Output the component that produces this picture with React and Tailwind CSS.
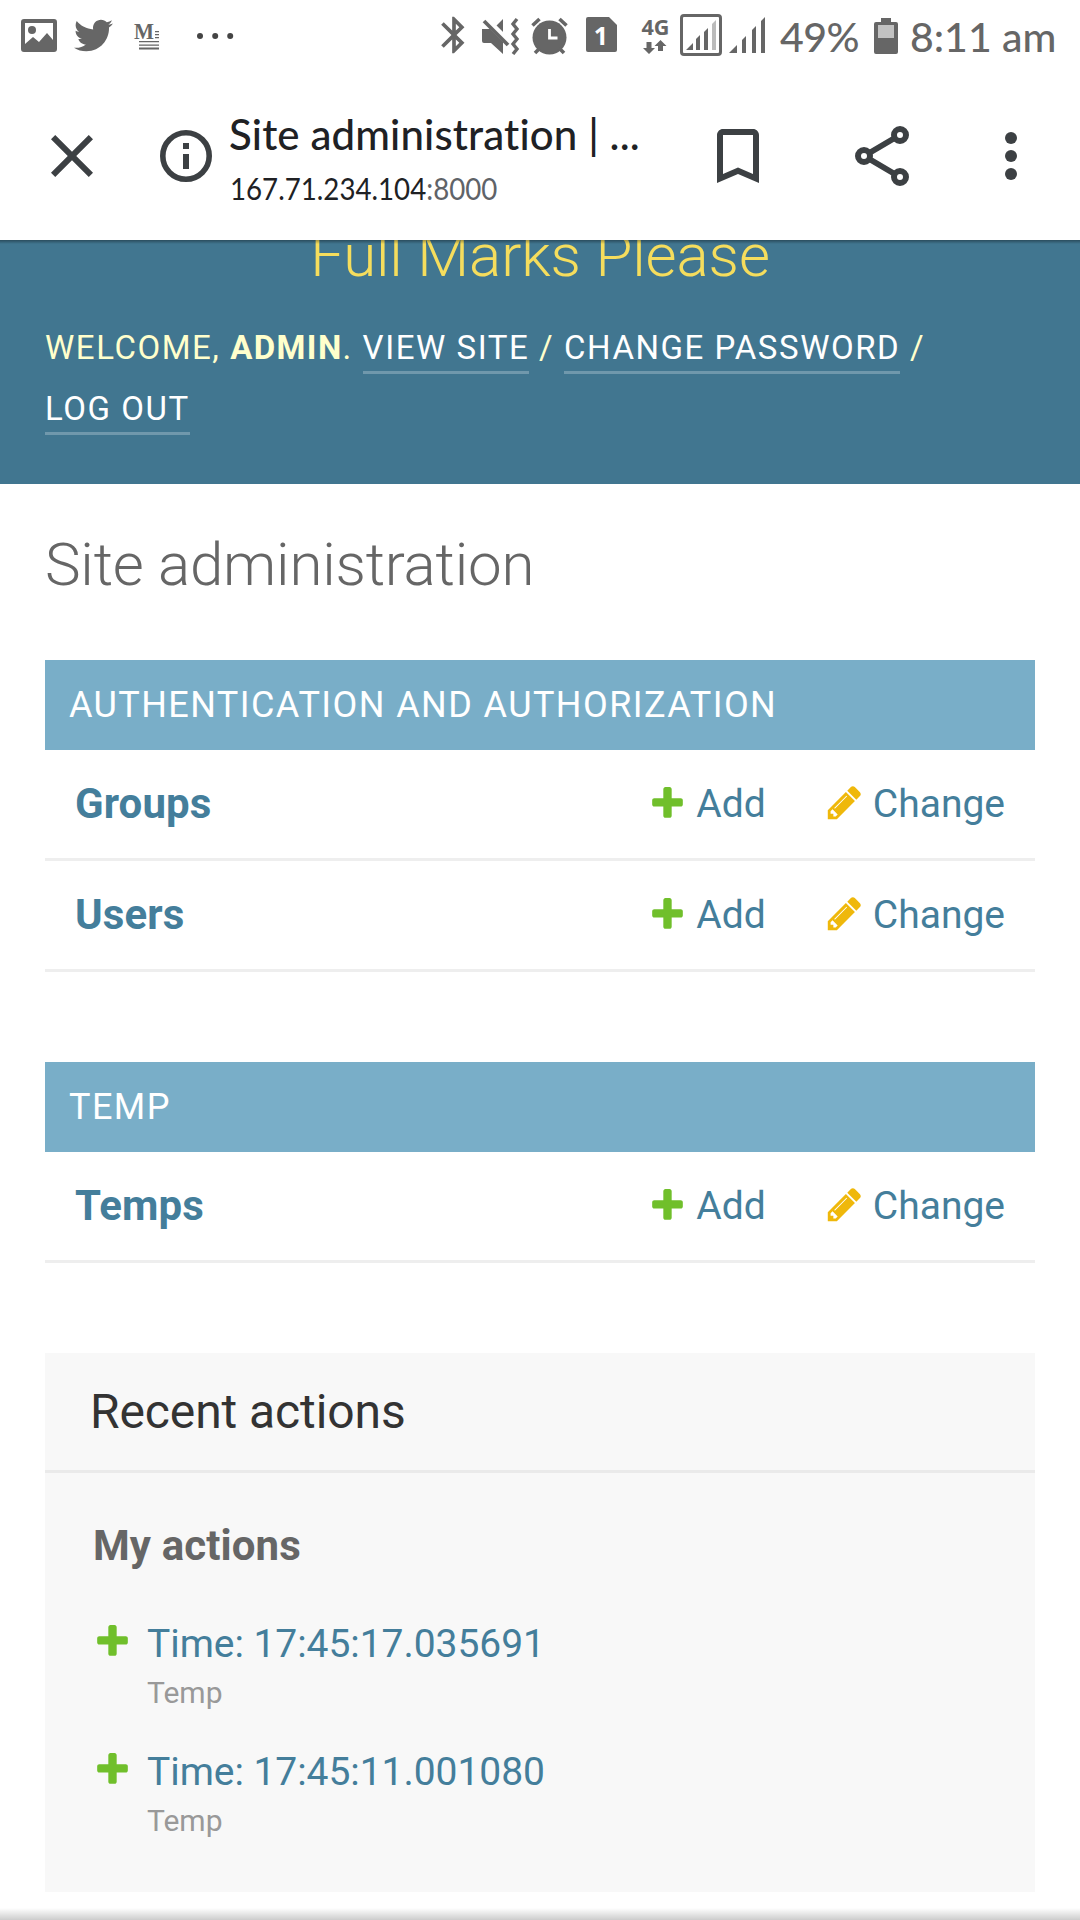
import React from "react";
import { FaTwitter } from "react-icons/fa";
import { MdBluetooth } from "react-icons/md";

const PlusIcon = ({ className }) => (
  <svg viewBox="0 0 1792 1792" className={`size-[39px] shrink-0 ${className || ""}`}>
    <path
      fill="#70bf2b"
      d="M1600 796v192q0 40-28 68t-68 28h-416v416q0 40-28 68t-68 28h-192q-40 0-68-28t-28-68v-416h-416q-40 0-68-28t-28-68v-192q0-40 28-68t68-28h416v-416q0-40 28-68t68-28h192q40 0 68 28t28 68v416h416q40 0 68 28t28 68z"
    />
  </svg>
);

const PencilIcon = () => (
  <svg viewBox="0 0 1792 1792" className="-mt-[3px] mr-[9px] size-[39px] shrink-0">
    <path
      fill="#efb80b"
      d="M491 1536l91-91-235-235-91 91v107h128v128h107zm523-928q0-22-22-22-10 0-17 7l-542 542q-7 7-7 17 0 22 22 22 10 0 17-7l542-542q7-7 7-17zm-54-192l416 416-832 832h-416v-416zm683 96q0 53-37 90l-166 166-416-416 166-165q36-38 90-38 53 0 91 38l235 234q37 39 37 91z"
    />
  </svg>
);

function StatusBar() {
  return (
    <div className="flex h-[72px] items-start text-[#666]">
      <svg className="mt-[19px] ml-[21px] h-[33px] w-9 shrink-0" viewBox="0 0 36 33" fill="currentColor">
        <path fillRule="evenodd" d="M3 0h30a3 3 0 0 1 3 3v27a3 3 0 0 1-3 3H3a3 3 0 0 1-3-3V3a3 3 0 0 1 3-3zm1 4v21l8-7 6 5 8-9 6 7V4z" />
        <circle cx="11" cy="11" r="4" />
      </svg>
      <FaTwitter className="mt-[16px] ml-[17px] size-[39px] shrink-0" />
      <svg className="mt-[13px] ml-[20px] h-[39px] w-[28px] shrink-0 overflow-visible" viewBox="0 -7 28 39" fill="currentColor">
        <text x="1" y="18.500" fontFamily="Liberation Serif" fontWeight="700" fontSize="23" textLength="20" lengthAdjust="spacingAndGlyphs">M</text>
        <path d="M22 11h4v1.300h-4zM22 14h4v1.300h-4zM22 17h4v1.300h-4zM6 21h20v1.300H6zM6 24.500h20v1.300H6zM6 27.500h20v2H6z" />
      </svg>
      <svg className="mt-[33px] ml-[36px] h-1.5 w-[37px] shrink-0" viewBox="0 0 37 6" fill="#444">
        <circle cx="3" cy="3" r="3" />
        <circle cx="18.200" cy="3" r="3" />
        <circle cx="33.200" cy="3" r="3" />
      </svg>
      <MdBluetooth className="-mr-[10px] mt-[13px] ml-[198px] size-[44px] shrink-0" />
      <svg className="mt-[17px] ml-[15px] h-[38px] w-[40px] shrink-0" viewBox="0 0 40 38" fill="currentColor">
        <path d="M1 12h8l13 13v12L10 26H3q-2 0-2-2zM22 2v14l-7-7z" />
        <path d="M6 1l24 24" stroke="#fff" strokeWidth="3" />
        <path d="M3 4l24 24" stroke="currentColor" strokeWidth="3.800" />
        <path d="M36 2l-4 5 4 5-4 5 4 5-4 5 4 5-4 5" fill="none" stroke="currentColor" strokeWidth="3.400" />
      </svg>
      <svg className="mt-[17px] ml-[10px] h-[38px] w-[38px] shrink-0" viewBox="0 0 38 38">
        <circle cx="18.500" cy="20.500" r="17" fill="currentColor" />
        <path d="M1.500 8.500l7-6.500M28.500 2l7 6.500M4 36l5-5M33 36l-5-5" stroke="currentColor" strokeWidth="3.600" />
        <path d="M18.500 12v9h8" fill="none" stroke="#fff" strokeWidth="2.800" />
      </svg>
      <svg className="mt-[17px] ml-[17px] h-[35px] w-[31px] shrink-0" viewBox="0 0 31 35">
        <path d="M2 0h21l8 8v25q0 2-2 2H2q-2 0-2-2V2q0-2 2-2z" fill="currentColor" />
        <text x="15" y="28" textAnchor="middle" fontFamily="Open Sans" fontWeight="700" fontSize="25" fill="#fff">1</text>
      </svg>
      <svg className="mt-[7px] ml-[24px] h-[48px] w-[29px] shrink-0 overflow-visible" viewBox="0 -10 29 48" fill="currentColor">
        <text x="0.500" y="17.500" fontFamily="Open Sans" fontWeight="700" fontSize="22" textLength="28" lengthAdjust="spacingAndGlyphs">4G</text>
        <path d="M5.500 25h5v6h3.500l-6 6-6-6h3.500zM17 34h5v-5h3.500l-6-6-6 6h3.500z" />
      </svg>
      <svg className="mt-[14px] ml-[10px] h-[42px] w-[42px] shrink-0" viewBox="0 0 42 42" fill="currentColor">
        <rect x="1.500" y="1.500" width="39" height="39" rx="2.500" fill="none" stroke="currentColor" strokeWidth="3" />
        <path d="M6 36l7-7v7zM16 36V25l4-4v15zM24 36V18l4-4v22z" />
        <path d="M32 36V10l4-4v30z" fill="#bbb" />
      </svg>
      <svg className="mt-[17px] ml-[7px] h-[36px] w-[36px] shrink-0" viewBox="0 0 36 36" fill="currentColor">
        <path d="M0 36l8-8v8zM13 36V23l4-4v17zM23 36V13l4-4v27zM32 36V4l4-4v36z" />
      </svg>
      <span className="mt-[16px] ml-[15px] w-[80px] shrink-0 font-['Lato',sans-serif] text-[41px] leading-[42px] font-medium tracking-[-0.5px] whitespace-nowrap">49%</span>
      <svg className="mt-[18px] ml-[14px] h-[36px] w-[24px] shrink-0" viewBox="0 0 24 36">
        <path d="M7 0h10v4h5q2 0 2 2v28q0 2-2 2H2q-2 0-2-2V6q0-2 2-2h5z" fill="currentColor" />
        <path d="M4 7h16v13H4z" fill="#c2c2c2" />
      </svg>
      <span className="mt-[16px] ml-[12px] shrink-0 font-['Lato',sans-serif] text-[41px] leading-[42px] font-medium whitespace-nowrap">8:11 am</span>
    </div>
  );
}

function BrowserBar() {
  return (
    <div className="flex h-[168px] items-start pt-[48px] text-[#3c4043]">
      <svg className="ml-9 size-[72px] shrink-0" viewBox="0 0 24 24" fill="currentColor">
        <path d="M19 6.410L17.590 5 12 10.590 6.410 5 5 6.410 10.590 12 5 17.590 6.410 19 12 13.410 17.590 19 19 17.590 13.410 12z" />
      </svg>
      <svg className="mt-[10px] ml-[52px] size-[52px] shrink-0" viewBox="0 0 52 52" fill="none" stroke="currentColor">
        <circle cx="26" cy="26" r="23.200" strokeWidth="5.600" />
        <path d="M26 13v6M26 24v15" strokeWidth="6" />
      </svg>
      <div className="ml-[17px] h-[110px] w-[440px] shrink-0 font-['Lato',sans-serif] whitespace-nowrap">
        <div className="-mt-[13px] text-[42px] leading-[54px] font-medium tracking-[0.12px] text-[#202124]">Site administration | ...</div>
        <div className="mt-[8px] ml-[1px] origin-left scale-x-[0.893] text-[31px] leading-[38px] text-[#202124]">
          167.71.234.104<span className="text-[#5f6368]">:8000</span>
        </div>
      </div>
      <svg className="ml-[33px] size-[72px] shrink-0" viewBox="0 0 24 24" fill="currentColor">
        <path d="M17 3H7c-1.100 0-2 .900-2 2v16l7-3 7 3V5c0-1.100-.900-2-2-2zm0 15l-5-2.180L7 18V5h10v13z" />
      </svg>
      <svg className="ml-[72px] size-[72px] shrink-0" viewBox="0 0 24 24" fill="none" stroke="currentColor" strokeWidth="2">
        <circle cx="18" cy="5" r="2" />
        <circle cx="6" cy="12" r="2" />
        <circle cx="18" cy="19" r="2" />
        <path d="M7.900 10.900l8.200-4.800M7.900 13.100l8.200 4.800" strokeWidth="1.900" />
      </svg>
      <svg className="ml-[57px] size-[72px] shrink-0" viewBox="0 0 24 24" fill="currentColor">
        <circle cx="12" cy="6" r="2" />
        <circle cx="12" cy="12" r="2" />
        <circle cx="12" cy="18" r="2" />
      </svg>
    </div>
  );
}

const HeaderLink = ({ children }) => (
  <a className="border-b-[3px] border-white/25 pb-[4px] text-white">{children}</a>
);

function SiteHeader() {
  return (
    <header className="relative h-[244px] overflow-hidden bg-[#417690] px-[45px] text-[#ffc]">
      <h1 className="-mt-[14px] text-center text-[60px] leading-[60px] font-light tracking-[-0.1px] text-[#f5dd5d]">Full Marks Please</h1>
      <div className="mt-[31px] text-[33px] leading-[61px] tracking-[1.55px] uppercase">
        Welcome, <strong className="font-bold tracking-[1.4px]">Admin</strong>. <HeaderLink>View site</HeaderLink> /{" "}
        <HeaderLink>Change password</HeaderLink> /<br />
        <HeaderLink>Log out</HeaderLink>
      </div>
      <div className="absolute inset-x-0 top-0 h-[4px] bg-linear-to-b from-black/35 to-transparent" />
    </header>
  );
}

function Module({ caption, models, className }) {
  return (
    <section className={className}>
      <h2 className="h-[90px] bg-[#79aec8] px-6 text-[36px] leading-[90px] tracking-[1.42px] text-white uppercase">{caption}</h2>
      {models.map((name) => (
        <div key={name} className="flex h-[111px] items-center border-b-[3px] border-[#eee] px-[30px] text-[#447e9b]">
          <span className="-mt-[2px] flex-1 text-[42px] font-bold tracking-[0.1px]">{name}</span>
          <a className="flex items-center text-[39px]">
            <PlusIcon className="-mt-[3px] mr-[9px]" />
            Add
          </a>
          <a className="ml-[59px] flex items-center text-[39px]">
            <PencilIcon />
            Change
          </a>
        </div>
      ))}
    </section>
  );
}

function RecentActions() {
  const actions = ["Time: 17:45:17.035691", "Time: 17:45:11.001080"];
  return (
    <section className="mt-[90px] h-[539px] bg-[#f8f8f8]">
      <h2 className="h-[120px] border-b-[3px] border-[#eaeaea] px-[45px] text-[48px] leading-[117px] tracking-[-0.1px] text-[#333]">Recent actions</h2>
      <div className="px-12 pt-[43px]">
        <h3 className="text-[42px] leading-[60px] font-bold tracking-[0.1px] text-[#666]">My actions</h3>
        <ul className="mt-[38px]">
          {actions.map((a) => (
            <li key={a} className="flex h-[128px]">
              <PlusIcon className="mt-[7px] mr-[15px]" />
              <div>
                <a className="block text-[39px] leading-[60px] tracking-[-0.05px] text-[#447e9b]">{a}</a>
                <span className="block text-[30px] leading-[38px] text-[#999]">Temp</span>
              </div>
            </li>
          ))}
        </ul>
      </div>
    </section>
  );
}

export default function App() {
  return (
    <div className="relative h-[1920px] w-[1080px] overflow-hidden bg-white font-['Roboto',sans-serif]">
      <StatusBar />
      <BrowserBar />
      <SiteHeader />
      <main className="px-[45px] pt-[51px]">
        <h1 className="text-[60px] leading-[60px] font-light tracking-[-0.2px] text-[#666]">Site administration</h1>
        <Module className="mt-[65px]" caption="Authentication and Authorization" models={["Groups", "Users"]} />
        <Module className="mt-[90px]" caption="Temp" models={["Temps"]} />
        <RecentActions />
      </main>
      <div className="absolute inset-x-0 bottom-0 h-3 bg-linear-to-b from-transparent to-black/20" />
    </div>
  );
}
